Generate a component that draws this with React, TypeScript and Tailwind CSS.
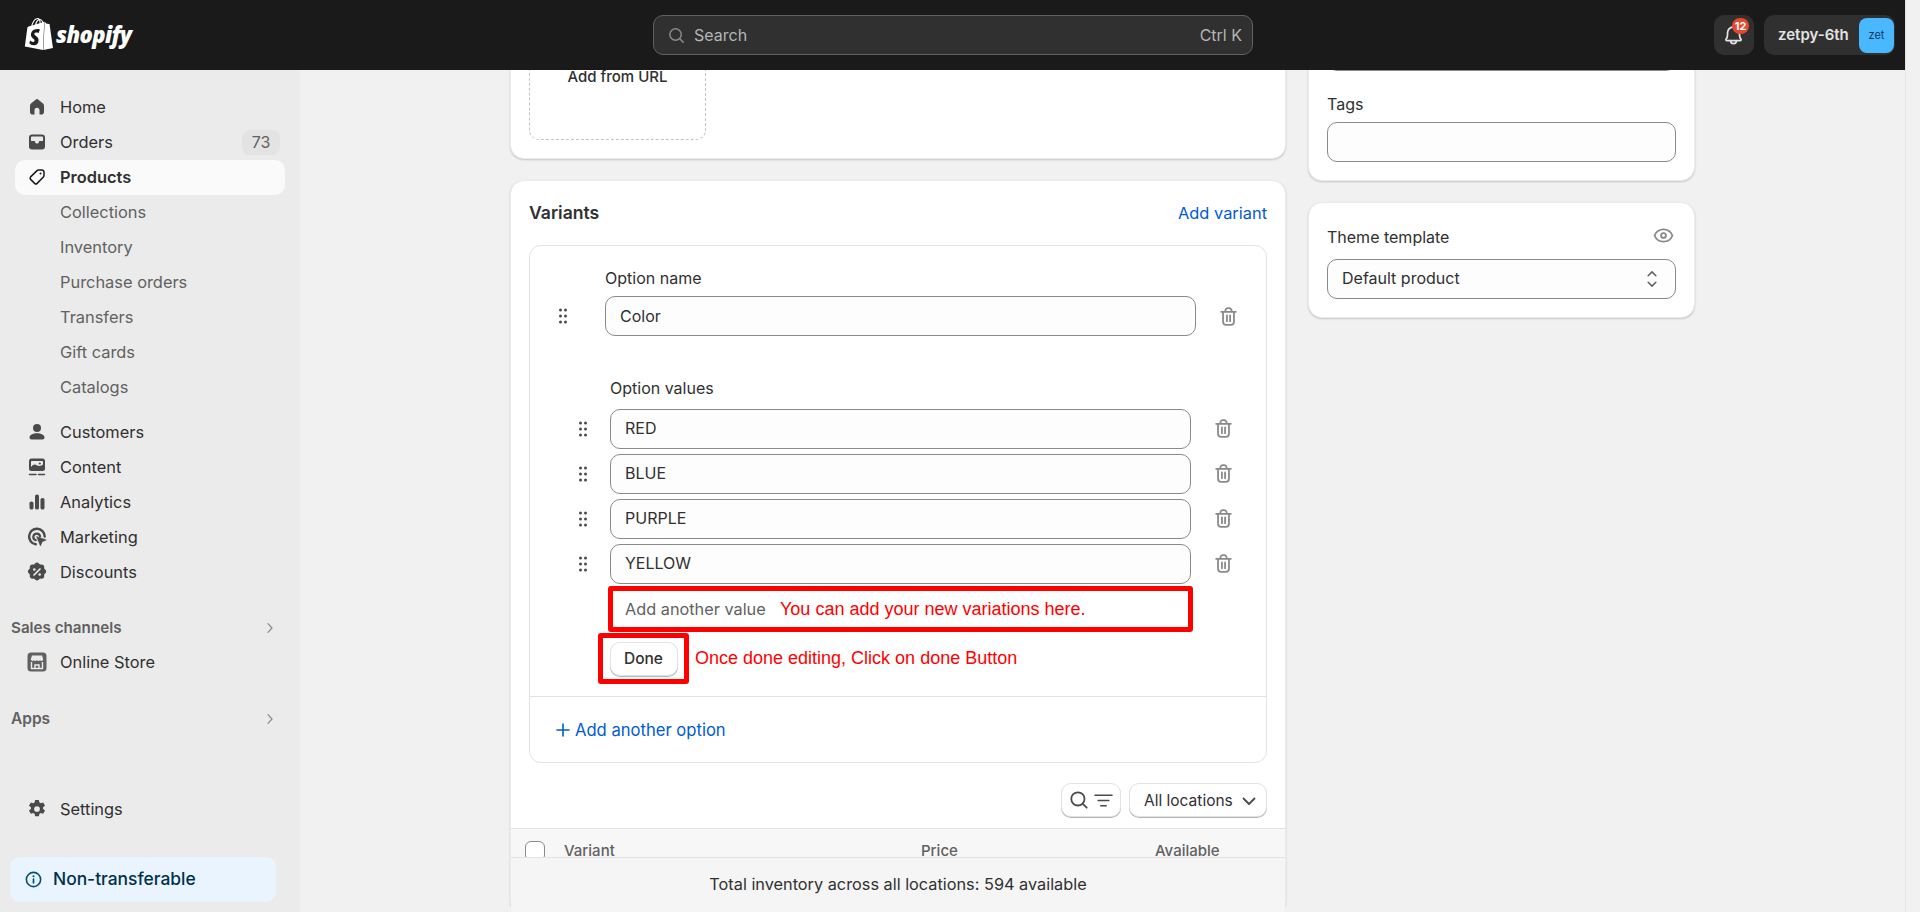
import React from "react";
import { SiShopify } from "react-icons/si";

type IconProps = { className?: string };

const HomeIcon = ({ className }: IconProps) => (
  <svg viewBox="0 0 20 20" className={className} fill="currentColor">
    <path d="M8.6 2.7a2.2 2.2 0 0 1 2.8 0l4.6 3.8c.6.5 1 1.2 1 2v6.2a2.8 2.8 0 0 1-2.800 2.800h-1.700v-4.200a2.500 2.500 0 0 0-5 0v4.200h-1.700a2.800 2.800 0 0 1-2.800-2.800v-6.200c0-.8.400-1.500 1-2z" />
  </svg>
);
const OrdersIcon = ({ className }: IconProps) => (
  <svg viewBox="0 0 20 20" className={className}>
    <rect x="2" y="2.500" width="16" height="15" rx="3" fill="currentColor" />
    <path d="M5 4.500h10a1 1 0 0 1 1 1v3.500h-3.300a.8.800 0 0 0-.8.700 1.900 1.900 0 0 1-3.800 0 .8.800 0 0 0-.8-.7h-3.300v-3.500a1 1 0 0 1 1-1z" fill="#ebebeb" />
  </svg>
);
const TagIcon = ({ className }: IconProps) => (
  <svg viewBox="0 0 20 20" className={className} fill="none" stroke="currentColor" strokeWidth="1.500" strokeLinejoin="round">
    <path d="M11.500 3h3.300a2.200 2.200 0 0 1 2.200 2.200v3.300c0 .6-.2 1.100-.6 1.500l-6.300 6.400a1.800 1.800 0 0 1-2.500 0l-4-4a1.800 1.800 0 0 1 0-2.500l6.400-6.300c.4-.4.900-.6 1.500-.6z" />
    <circle cx="13.500" cy="6.500" r="1" fill="currentColor" stroke="none" />
  </svg>
);
const PersonIcon = ({ className }: IconProps) => (
  <svg viewBox="0 0 20 20" className={className} fill="currentColor">
    <circle cx="10" cy="6" r="4" />
    <path d="M2.500 15.500c0-2.600 3.300-4.300 7.500-4.300s7.500 1.700 7.500 4.300c0 1.200-.9 2-2 2h-11c-1.100 0-2-.8-2-2z" />
  </svg>
);
const ContentIcon = ({ className }: IconProps) => (
  <svg viewBox="0 0 20 20" className={className}>
    <rect x="2" y="1.500" width="16" height="12.500" rx="2.500" fill="currentColor" />
    <path d="M4 10.500v-5.500a1 1 0 0 1 1-1h10a1 1 0 0 1 1 1v2.500a6 6 0 0 1-3.500 1.500c-2.500 0-3-1.500-5-1.500a5 5 0 0 0-3.500 2.500z" fill="#ebebeb" />
    <circle cx="12.800" cy="6.500" r="1.100" fill="currentColor" />
    <path d="M2.500 17.500h6.500M11.500 17.500h6" stroke="currentColor" strokeWidth="1.500" strokeLinecap="round" />
  </svg>
);
const AnalyticsIcon = ({ className }: IconProps) => (
  <svg viewBox="0 0 20 20" className={className} fill="currentColor">
    <rect x="2.500" y="9.500" width="4" height="8" rx="1.800" />
    <rect x="8" y="2.500" width="4" height="15" rx="1.800" />
    <rect x="13.500" y="6" width="4" height="11.500" rx="1.800" />
  </svg>
);
const MarketingIcon = ({ className }: IconProps) => (
  <svg viewBox="0 0 20 20" className={className} fill="none" stroke="currentColor">
    <path d="M8.800 17.300a7.800 7.800 0 1 1 8.900-7.800" strokeWidth="2.400" strokeLinecap="round" />
    <path d="M8.800 13.200a3.400 3.400 0 1 1 4.300-3.700" strokeWidth="2.200" strokeLinecap="round" />
    <path d="M9.500 9.500l9.800 3.400-4 1.800-1.900 4.200z" fill="currentColor" strokeWidth=".5" strokeLinejoin="round" />
  </svg>
);
const DiscountIcon = ({ className }: IconProps) => (
  <svg viewBox="0 0 20 20" className={className}>
    <path d="M8 1.600a2.800 2.800 0 0 1 4 0l.9.900 1.300-.1a2.800 2.800 0 0 1 3 2.900v1.300l.9.900a2.800 2.800 0 0 1 0 4.100l-.9.900v1.300a2.800 2.800 0 0 1-3 2.900l-1.300-.1-.9.900a2.800 2.800 0 0 1-4 0l-.9-.9-1.300.1a2.800 2.800 0 0 1-3-2.900v-1.300l-.9-.9a2.800 2.800 0 0 1 0-4.100l.9-.9v-1.300a2.800 2.800 0 0 1 3-2.900l1.300.1z" fill="currentColor" />
    <path d="M7 13l6-6" stroke="#ebebeb" strokeWidth="1.700" strokeLinecap="round" />
    <circle cx="7.300" cy="7.500" r="1.300" fill="#ebebeb" />
    <circle cx="12.700" cy="12.500" r="1.300" fill="#ebebeb" />
  </svg>
);
const StoreIcon = ({ className }: IconProps) => (
  <svg viewBox="0 0 20 20" className={className}>
    <rect x="0.500" y="0.500" width="19" height="19" rx="3.500" fill="#616161" />
    <path d="M5 3.500h10l1.200 3.800a1.800 1.800 0 0 1-3.100 1 2.200 2.200 0 0 1-3.100 0 2.200 2.200 0 0 1-3.100 0 1.800 1.800 0 0 1-3.100-1z" fill="#ebebeb" />
    <path d="M4.500 10v6.500h11v-6.500" fill="none" stroke="#ebebeb" strokeWidth="1.400" />
    <path d="M8 16.500v-3.500h4v3.500" fill="none" stroke="#ebebeb" strokeWidth="1.400" />
  </svg>
);
const GearIcon = ({ className }: IconProps) => (
  <svg viewBox="0 0 20 20" className={className} fill="currentColor">
    <path fillRule="evenodd" d="M8.300 1.800h3.400l.5 2.300c.4.200.8.400 1.200.7l2.200-.8 1.700 3-1.800 1.500v1.400l1.800 1.500-1.700 3-2.200-.8c-.4.300-.8.500-1.200.7l-.5 2.300h-3.400l-.5-2.300c-.4-.2-.8-.4-1.200-.7l-2.200.8-1.700-3 1.800-1.500v-1.400l-1.800-1.500 1.700-3 2.200.8c.4-.3.800-.5 1.200-.7zM10 12.600a2.600 2.600 0 1 0 0-5.200 2.600 2.600 0 0 0 0 5.200z" />
  </svg>
);
const InfoIcon = ({ className }: IconProps) => (
  <svg viewBox="0 0 20 20" className={className} fill="none" stroke="currentColor">
    <circle cx="10" cy="10" r="7.500" strokeWidth="1.700" />
    <path d="M10 9.500v4" strokeWidth="1.800" strokeLinecap="round" />
    <circle cx="10" cy="6.500" r="1.100" fill="currentColor" stroke="none" />
  </svg>
);
const ChevronRight = ({ className }: IconProps) => (
  <svg viewBox="0 0 20 20" className={className} fill="none" stroke="currentColor" strokeWidth="1.500" strokeLinecap="round" strokeLinejoin="round">
    <path d="M7.500 4.500l5 5.500-5 5.500" />
  </svg>
);
const SearchIcon = ({ className }: IconProps) => (
  <svg viewBox="0 0 20 20" className={className} fill="none" stroke="currentColor" strokeWidth="1.600" strokeLinecap="round">
    <circle cx="9" cy="9" r="6" />
    <path d="M13.500 13.500l3.500 3.500" />
  </svg>
);
const BellIcon = ({ className }: IconProps) => (
  <svg viewBox="0 0 20 20" className={className} fill="none" stroke="currentColor" strokeWidth="1.500" strokeLinejoin="round" strokeLinecap="round">
    <path d="M10 2.500a5.200 5.200 0 0 0-5.200 5.200v1.800c0 1.400-.5 2.700-1.300 3.800-.3.500 0 1.200.7 1.200h11.600c.7 0 1-.7.700-1.200-.8-1.100-1.300-2.400-1.300-3.800v-1.800a5.200 5.200 0 0 0-5.200-5.200z" />
    <path d="M7.500 14.500a2.500 2.500 0 0 0 5 0" />
  </svg>
);
const TrashIcon = ({ className }: IconProps) => (
  <svg viewBox="0 0 20 20" className={className} fill="none" stroke="currentColor" strokeWidth="1.700" strokeLinecap="round" strokeLinejoin="round">
    <path d="M7 5v-.500a2.500 2.500 0 0 1 2.500-2.500h1a2.500 2.500 0 0 1 2.500 2.500v.500" />
    <path d="M3 5.500h14" />
    <path d="M4.800 5.500v9.500a3 3 0 0 0 3 3h4.400a3 3 0 0 0 3-3v-9.500" />
    <path d="M8.500 9v5.500M11.500 9v5.500" />
  </svg>
);
const DragIcon = () => (
  <svg viewBox="0 0 10 16" className="w-[10px] h-[16px] text-[#4a4a4a]" fill="currentColor">
    <circle cx="2.500" cy="2" r="1.500" />
    <circle cx="7.500" cy="2" r="1.500" />
    <circle cx="2.500" cy="8" r="1.500" />
    <circle cx="7.500" cy="8" r="1.500" />
    <circle cx="2.500" cy="14" r="1.500" />
    <circle cx="7.500" cy="14" r="1.500" />
  </svg>
);
const EyeIcon = ({ className }: IconProps) => (
  <svg viewBox="0 0 20 20" className={className} fill="none" stroke="currentColor" strokeWidth="1.800">
    <path d="M1.500 10c1.500-3.700 4.700-5.800 8.500-5.800s7 2.100 8.500 5.800c-1.500 3.700-4.700 5.800-8.500 5.800s-7-2.100-8.500-5.800z" />
    <circle cx="10" cy="10" r="2.300" />
  </svg>
);
const UpDownIcon = ({ className }: IconProps) => (
  <svg viewBox="0 0 20 20" className={className} fill="none" stroke="currentColor" strokeWidth="1.400" strokeLinecap="round" strokeLinejoin="round">
    <path d="M6.500 7l3.500-3.500 3.500 3.500M6.500 13l3.500 3.500 3.500-3.500" />
  </svg>
);
const FilterLines = ({ className }: IconProps) => (
  <svg viewBox="0 0 20 20" className={className} fill="none" stroke="currentColor" strokeWidth="1.600" strokeLinecap="round">
    <path d="M2 5h16M5 10h10M7.500 15h5" />
  </svg>
);
const ChevronDown = ({ className }: IconProps) => (
  <svg viewBox="0 0 20 20" className={className} fill="none" stroke="currentColor" strokeWidth="1.800" strokeLinecap="round" strokeLinejoin="round">
    <path d="M4.500 7.500l5.500 5.500 5.500-5.500" />
  </svg>
);

const iconCls = "w-[20px] h-[20px] text-[#4a4a4a]";

const NavItem = ({ icon, label, badge }: { icon: React.ReactNode; label: string; badge?: string }) => (
  <div className="h-[35px] flex items-center pl-[27px] pr-[20px] pb-[1px] text-[16.4px] text-[#303030]">
    <span className="w-[33px] shrink-0 flex">{icon}</span>
    <span className="flex-1">{label}</span>
    {badge && (
      <span className="w-[38px] h-[25px] rounded-[8px] bg-[#e3e3e3] text-[#616161] text-[16px] flex items-center justify-center">
        {badge}
      </span>
    )}
  </div>
);
const SubItem = ({ label }: { label: string }) => (
  <div className="h-[35px] flex items-center pl-[60px] pb-[1px] text-[16.4px] text-[#616161]">{label}</div>
);
const SectionRow = ({ label, className }: { label: string; className?: string }) => (
  <div className={`h-[35px] flex items-center justify-between pl-[11px] pr-[22px] font-semibold text-[#616161] ${className ?? ""}`}>
    <span>{label}</span>
    <ChevronRight className="w-[16px] h-[16px] text-[#8a8a8a]" />
  </div>
);

const Sidebar = () => (
  <aside className="w-[300px] shrink-0 bg-[#ebebeb] pt-[20px] pb-[10px] flex flex-col">
    <NavItem icon={<HomeIcon className={iconCls} />} label="Home" />
    <NavItem icon={<OrdersIcon className={iconCls} />} label="Orders" badge="73" />
    <div className="h-[35px] mx-[15px] rounded-[10px] bg-[#fafafa] flex items-center pl-[12px] pb-[1px] text-[16.4px] font-semibold text-[#303030]">
      <span className="w-[33px] flex">
        <TagIcon className="w-[20px] h-[20px] text-[#1a1a1a]" />
      </span>
      Products
    </div>
    {["Collections", "Inventory", "Purchase orders", "Transfers", "Gift cards", "Catalogs"].map((l) => (
      <SubItem key={l} label={l} />
    ))}
    <div className="h-[10px]" />
    <NavItem icon={<PersonIcon className={iconCls} />} label="Customers" />
    <NavItem icon={<ContentIcon className={iconCls} />} label="Content" />
    <NavItem icon={<AnalyticsIcon className={iconCls} />} label="Analytics" />
    <NavItem icon={<MarketingIcon className={iconCls} />} label="Marketing" />
    <NavItem icon={<DiscountIcon className={iconCls} />} label="Discounts" />
    <SectionRow label="Sales channels" className="mt-[20px] pt-[1px] text-[15.2px]" />
    <NavItem icon={<StoreIcon className={iconCls} />} label="Online Store" />
    <SectionRow label="Apps" className="mt-[20px] pt-[2px] text-[15.5px]" />
    <div className="mt-auto mb-[30px]">
      <NavItem icon={<GearIcon className="w-[22px] h-[22px] -ml-[1px] text-[#4a4a4a]" />} label="Settings" />
    </div>
    <div className="mx-[10px] w-[266px] h-[45px] rounded-[10px] bg-[#eaf4ff] flex items-center pl-[14px] pb-[1px] gap-[10px] text-[17.4px] font-medium text-[#00314b]">
      <InfoIcon className="w-[19px] h-[19px] text-[#00527c]" />
      Non-transferable
    </div>
  </aside>
);

const TopBar = () => (
  <header className="h-[70px] shrink-0 bg-[#1a1a1a] flex items-center relative">
    <div className="w-[653px] shrink-0 flex items-center pl-[23px] gap-[1px] text-white">
      <SiShopify className="w-[32px] h-[32px] text-white -mt-[2px]" />
      <span className="font-['Open_Sans',sans-serif] italic font-extrabold text-[22px] tracking-[-0.6px] leading-none -mt-[3px]">shopify</span>
    </div>
    <div className="w-[600px] h-[40px] rounded-[10px] bg-[#303030] border border-[#616161] flex items-center pl-[13px] pr-[10px] text-[16px] text-[#b5b5b5]">
      <SearchIcon className="w-[19px] h-[19px] text-[#8a8a8a] mr-[8px]" />
      <span className="flex-1">Search</span>
      <span>Ctrl K</span>
    </div>
    <div className="ml-auto mr-[10px] flex items-center gap-[10px]">
      <div className="w-[40px] h-[40px] rounded-[10px] bg-[#303030] flex items-center justify-center relative">
        <BellIcon className="w-[23px] h-[23px] -ml-[2px] text-[#e3e3e3]" />
        <span className="absolute left-[18px] top-[3px] w-[17px] h-[16px] rounded-full bg-[#e5482d] text-white text-[11px] font-bold flex items-center justify-center leading-none">12</span>
      </div>
      <div className="w-[131px] h-[40px] rounded-[10px] bg-[#303030] flex items-center justify-between pl-[14px] pr-[1px] text-[15px] font-semibold text-[#e3e3e3]">
        <span>zetpy-6th</span>
        <span className="w-[35px] h-[35px] rounded-[8px] bg-[#4ab8ff] text-[#0b3a5e] text-[11px] font-normal flex items-center justify-center">zet</span>
      </div>
    </div>
  </header>
);

const fieldCls = "h-[40px] rounded-[10px] border border-[#8a8a8a] bg-[#fdfdfd] flex items-center text-[16px] text-[#303030]";
const cardCls = "bg-white rounded-[14px] border border-[#ebebeb] shadow-[0_1px_2px_rgba(0,0,0,0.18)]";

const ValueRow = ({ v }: { v: string }) => (
  <div className="flex items-center pl-[48px]">
    <DragIcon />
    <div className={`${fieldCls} w-[581px] ml-[22px] pl-[14px] pb-[2px]`}>{v}</div>
    <TrashIcon className="w-[21px] h-[21px] text-[#8a8a8a] ml-[22px] -mt-[2px]" />
  </div>
);

const VariantsCard = () => (
  <section className={cardCls}>
    <div className="h-[64px] flex items-center justify-between px-[18px]">
      <h2 className="text-[17.6px] font-semibold text-[#303030]">Variants</h2>
      <span className="text-[16.4px] text-[#005bd3]">Add variant</span>
    </div>
    <div className="mx-[18px] h-[518px] rounded-[12px] border border-[#e3e3e3] pt-[20px]">
      <div className="ml-[75px] text-[16px] leading-[24px] text-[#303030]">Option name</div>
      <div className="flex items-center pl-[28px] mt-[6px]">
        <DragIcon />
        <div className={`${fieldCls} w-[591px] ml-[37px] pl-[14px]`}>Color</div>
        <TrashIcon className="w-[21px] h-[21px] text-[#8a8a8a] ml-[22px]" />
      </div>
      <div className="ml-[80px] mt-[40px] text-[16px] leading-[24px] text-[#303030]">Option values</div>
      <div className="mt-[9px] flex flex-col gap-[5px]">
        {["RED", "BLUE", "PURPLE", "YELLOW"].map((v) => (
          <ValueRow key={v} v={v} />
        ))}
      </div>
      <div className="ml-[78px] mt-[2px] w-[585px] h-[46px] border-[5px] border-[#ff0000] rounded-[3px] flex items-center pl-[12px]">
        <span className="w-[155px] text-[16.3px] text-[#616161]">Add another value</span>
        <span className="font-['Liberation_Sans',sans-serif] text-[18px] text-[#ff0000]">You can add your new variations here.</span>
      </div>
      <div className="ml-[68px] mt-[1px] flex items-center">
        <div className="w-[91px] h-[51px] border-[5px] border-[#ff0000] rounded-[3px] flex items-center justify-center">
          <div className="w-[68px] h-[34px] rounded-[10px] bg-white border border-[#e3e3e3] shadow-[0_1px_0_#b5b5b5] flex items-center justify-center text-[15.5px] font-medium text-[#303030]">
            Done
          </div>
        </div>
        <span className="ml-[6px] font-['Liberation_Sans',sans-serif] text-[18px] text-[#ff0000]">Once done editing, Click on done Button</span>
      </div>
      <div className="mt-[12px] border-t border-[#e3e3e3] h-[65px] flex items-center pl-[26px] pt-[2px] text-[16.6px] text-[#005bd3]">
        <svg viewBox="0 0 14 14" className="w-[14px] h-[14px] mr-[5px]" fill="none" stroke="currentColor" strokeWidth="1.600" strokeLinecap="round">
          <path d="M7 1v12M1 7h12" />
        </svg>
        Add another option
      </div>
    </div>
    <div className="flex justify-end gap-[8px] px-[18px] mt-[20px]">
      <div className="w-[60px] h-[34px] rounded-[10px] bg-white border border-[#e3e3e3] shadow-[0_1px_0_#b5b5b5] flex items-center justify-center gap-[3px] text-[#4a4a4a]">
        <SearchIcon className="w-[22px] h-[22px]" />
        <FilterLines className="w-[21px] h-[21px]" />
      </div>
      <div className="w-[138px] h-[34px] rounded-[10px] bg-white border border-[#e3e3e3] shadow-[0_1px_0_#b5b5b5] flex items-center pl-[14px] pt-[1px] gap-[6px] text-[15.5px] text-[#303030]">
        All locations
        <ChevronDown className="w-[20px] h-[20px] text-[#4a4a4a]" />
      </div>
    </div>
    <div className="mt-[11px] h-[29px] overflow-hidden bg-[#f7f7f7] border-t border-[#e3e3e3] flex text-[15px] font-medium text-[#616161]">
      <span className="ml-[14px] mt-[12px] w-[20px] h-[20px] rounded-[6px] border border-[#8a8a8a] bg-white shrink-0" />
      <span className="ml-[19px] w-[357px] mt-[11px] shrink-0">Variant</span>
      <span className="w-[234px] mt-[11px] shrink-0">Price</span>
      <span className="mt-[11px]">Available</span>
    </div>
    <div className="h-[56px] bg-[#f5f5f5] border-t border-[#e3e3e3] flex items-center justify-center text-[16.3px] text-[#303030] pb-[3px]">
      Total inventory across all locations: 594 available
    </div>
  </section>
);

const MainColumn = () => (
  <div className="w-[776px] shrink-0 flex flex-col gap-[21px]">
    <section className={`${cardCls} pt-[20px] pb-[18px] px-[18px]`}>
      <div className="w-[177px] h-[179px] rounded-[10px] border border-dashed border-[#c4c4c4] pt-[103px] text-center text-[15px] leading-[24px] font-medium text-[#303030]">
        Add from URL
      </div>
    </section>
    <VariantsCard />
  </div>
);

const SideColumn = () => (
  <div className="w-[387px] shrink-0 flex flex-col gap-[21px]">
    <section className={`${cardCls} pt-[90px] pb-[18px] px-[18px]`}>
      <div className={fieldCls} />
      <div className="mt-[21px] text-[16px] leading-[24px] text-[#303030]">Tags</div>
      <div className={`${fieldCls} mt-[6px]`} />
    </section>
    <section className={`${cardCls} pt-[22px] pb-[18px] px-[18px]`}>
      <div className="flex items-center justify-between pr-[2px]">
        <span className="text-[16px] leading-[24px] text-[#303030]">Theme template</span>
        <EyeIcon className="w-[21px] h-[21px] text-[#8a8a8a] -mt-[4px]" />
      </div>
      <div className={`${fieldCls} mt-[10px] pl-[14px] pr-[12px] pb-[2px] justify-between text-[16.3px]`}>
        Default product
        <UpDownIcon className="w-[22px] h-[22px] mt-[2px] text-[#616161]" />
      </div>
    </section>
  </div>
);

export default function App() {
  return (
    <div className="h-[912px] w-full overflow-hidden flex bg-[#f1f1f1] font-['Inter',sans-serif]">
      <div className="flex-1 min-w-0 flex flex-col">
        <TopBar />
        <div className="flex-1 min-h-0 flex">
          <Sidebar />
          <main className="flex-1 min-w-0 overflow-hidden bg-[#f1f1f1] pl-[210px]">
            <div className="flex items-start gap-[22px] -mt-[130px]">
              <MainColumn />
              <SideColumn />
            </div>
          </main>
        </div>
      </div>
      <div className="w-[15px] shrink-0 border-l border-[#e3e3e3] bg-[#f1f1f1]" />
    </div>
  );
}
